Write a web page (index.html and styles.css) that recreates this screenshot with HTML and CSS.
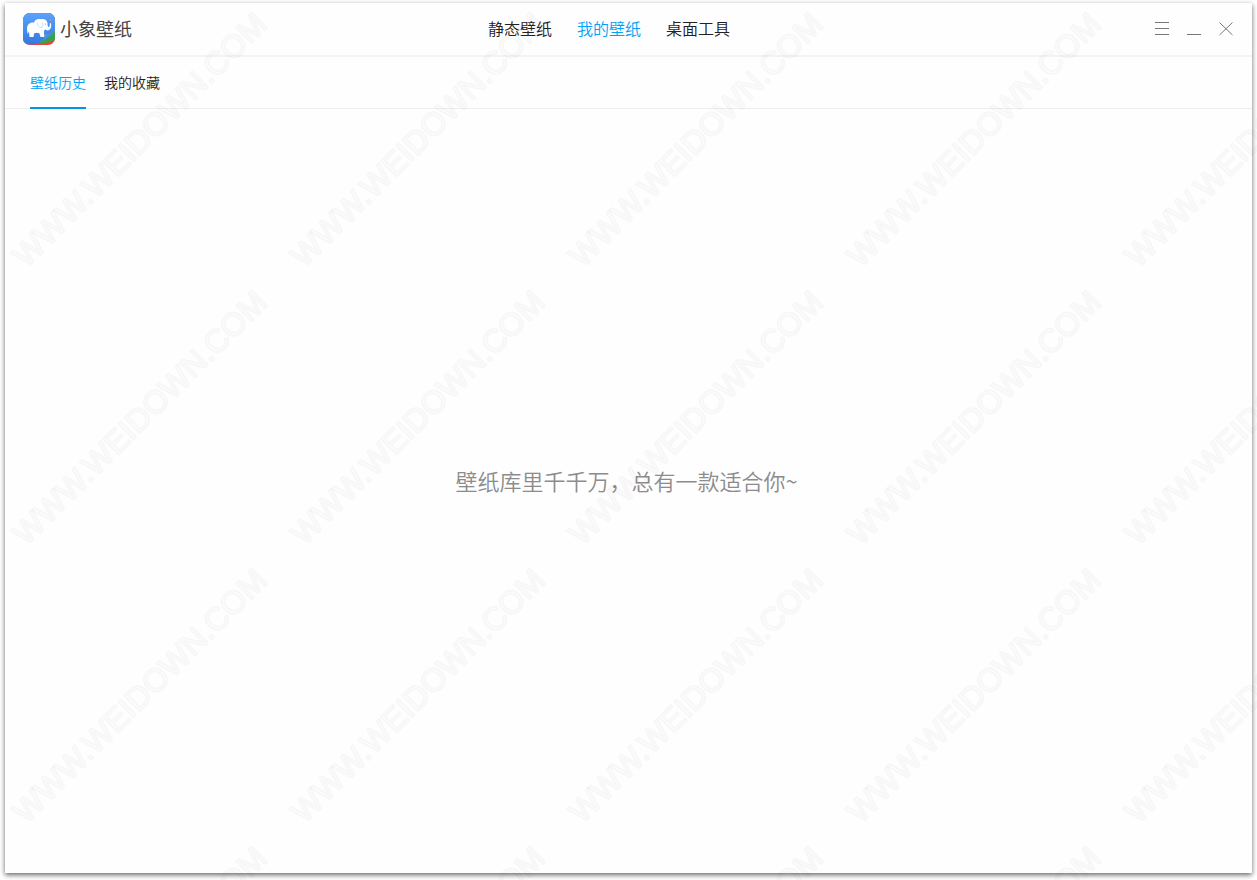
FILE: index.html
```html
<!DOCTYPE html>
<html lang="zh-CN">
<head>
<meta charset="utf-8">
<title>小象壁纸</title>
<link rel="stylesheet" href="styles.css">
</head>
<body>
<div class="window">
  <header class="titlebar">
    <div class="brand">
      <svg class="brand-icon" viewBox="0 0 32 32" aria-hidden="true">
        <defs>
          <linearGradient id="sky" x1="0" y1="0" x2="0" y2="1">
            <stop offset="0" stop-color="#5ba2fb"/>
            <stop offset="1" stop-color="#3478e2"/>
          </linearGradient>
          <linearGradient id="fold" x1="0" y1="0" x2="1" y2="1">
            <stop offset="0.3" stop-color="#5c9fe8"/>
            <stop offset="1" stop-color="#2a6a9c"/>
          </linearGradient>
          <clipPath id="tile"><rect width="32" height="32" rx="7"/></clipPath>
        </defs>
        <g clip-path="url(#tile)">
          <rect width="32" height="32" fill="#ea4435"/>
          <path d="M0 0H32V27Q27 30 20 30.500H0Z" fill="#34a350"/>
          <path d="M0 0H32V18L15 30.500Q10 32 0 31Z" fill="url(#sky)"/>
          <path d="M32 18Q29 21 22 21.500Q21 28 14 30.500Q26 26.500 32 18Z" fill="url(#fold)"/>
        </g>
        <path d="M4 16C4 11 7 9 11 9.500C12 6.500 15 5.500 18 6.300C21 5.500 24 7 24.500 10C24.500 13 25 14.500 26 14C27.200 13.300 26.500 11.500 26.800 10L28 10.500C28.600 13 28 16 26 17C24.500 17.800 23 17.300 22.300 16.200L21 18L21.300 24H17.500L16.500 20.500C14.500 19.500 12.500 19.800 11 20.500L10.500 24H6.500L6 18.500L4.500 21Z" fill="#fff"/>
        <path d="M14.500 9.500C14 12.500 15.500 14.500 18 14.500C20 14 20.500 11.500 19.500 9.500" fill="none" stroke="#b7d5fb" stroke-width=".8"/>
        <circle cx="22.500" cy="11" r=".6" fill="#4b8ff0"/>
        <path d="M27.500 6V8M26.500 7H28.500" stroke="#c98ba8" stroke-width=".8"/>
      </svg>
      <span class="brand-name">小象壁纸</span>
    </div>
    <nav class="main-nav">
      <a href="#static">静态壁纸</a>
      <a href="#mine" class="active">我的壁纸</a>
      <a href="#tools">桌面工具</a>
    </nav>
    <div class="controls">
      <button type="button" aria-label="菜单"><svg viewBox="0 0 14 14"><path d="M0 .5H14M0 6.500H14M0 12.500H14"/></svg></button>
      <button type="button" aria-label="最小化"><svg viewBox="0 0 14 14"><path d="M0 12.500H14"/></svg></button>
      <button type="button" aria-label="关闭"><svg viewBox="0 0 14 14"><path d="M.5 .5L13.500 13M13.500 .5L.5 13"/></svg></button>
    </div>
  </header>
  <nav class="tabs">
    <a href="#history" class="active">壁纸历史</a>
    <a href="#favorites">我的收藏</a>
  </nav>
  <main class="empty"><p>壁纸库里千千万，总有一款适合你~</p></main>
</div>
<svg class="watermark" aria-hidden="true">
  <defs>
    <pattern id="mark" width="278" height="278" patternUnits="userSpaceOnUse">
      <text x="139" y="151" transform="rotate(-45 139 139)" text-anchor="middle">WWW.WEIDOWN.COM</text>
    </pattern>
  </defs>
  <rect width="100%" height="100%" fill="url(#mark)"/>
</svg>
</body>
</html>
```
FILE: styles.css
```css
* { box-sizing: border-box; }
body {
  margin: 0;
  min-height: 100vh;
  padding: 3px 5px 7px;
  display: flex;
  background: #fff;
  position: relative;
  overflow: hidden;
  font-family: "Noto Sans CJK SC", sans-serif;
  font-weight: 350;
  color: #222;
}
a { color: inherit; text-decoration: none; }
.window {
  flex: 1;
  display: flex;
  flex-direction: column;
  background: #fefefe;
  box-shadow: 0 2px 5px rgba(0, 0, 0, .6);
}
.titlebar {
  height: 54px;
  display: grid;
  grid-template-columns: 1fr auto 1fr;
  align-items: center;
  padding: 0 19px 0 18px;
  border-bottom: 2px solid #f3f3f3;
}
.brand { display: flex; align-items: center; gap: 5px; }
.brand-icon { width: 32px; height: 32px; }
.brand-name { padding-bottom: 2px; font-size: 18px; line-height: 24px; font-weight: 400; color: #444; }
.main-nav { display: flex; gap: 25px; margin-right: 38px; padding-bottom: 2px; font-size: 16px; line-height: 24px; }
.main-nav .active, .tabs .active { color: #00a2f8; }
.controls { display: flex; justify-content: flex-end; gap: 18px; }
.controls button { width: 14px; height: 14px; padding: 0; border: 0; background: none; }
.controls svg { display: block; width: 14px; height: 14px; fill: none; stroke: #777; stroke-width: 1; }
.tabs {
  height: 52px;
  display: flex;
  gap: 18px;
  padding: 0 25px;
  border-bottom: 1px solid #eee;
  font-size: 14px;
  line-height: 50px;
}
.tabs a { height: 52px; }
.tabs .active { border-bottom: 2px solid #0096e6; }
.empty { flex: 1; display: flex; align-items: center; justify-content: center; }
.empty p { margin: 0; padding: 0 4px 22px 0; font-size: 22px; line-height: 32px; color: #8c8c8c; }
.watermark { position: absolute; inset: 0; width: 100%; height: 100%; pointer-events: none; }
.watermark text {
  font-family: "Liberation Sans", sans-serif;
  font-size: 32px;
  font-weight: 400;
  fill: none;
  stroke: rgba(0, 0, 0, .027);
  stroke-width: 2;
  stroke-linejoin: round;
}
```
